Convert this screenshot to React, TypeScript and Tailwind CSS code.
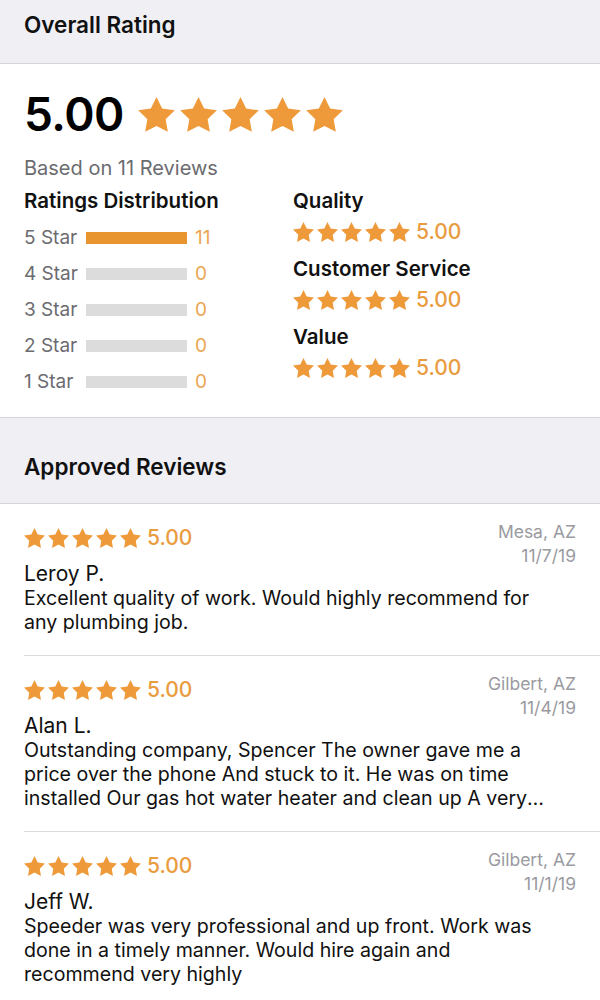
import React from "react";

const FONT = { fontFamily: "Inter, 'Noto Sans', sans-serif" };

function Star({ className }: { className: string }) {
  return (
    <svg viewBox="2 2 20 19.1" className={className} fill="currentColor">
      <path d="M12 2l3.09 6.26L22 9.27l-5 4.87 1.18 6.88L12 17.770l-6.18 3.25L7 14.14 2 9.27l6.91-1.01L12 2z" />
    </svg>
  );
}

function Stars({ size = "small" }: { size?: "small" | "big" }) {
  const big = size === "big";
  return (
    <div className={big ? "flex gap-[5px] text-[#ee9a3a]" : "flex gap-[3px] text-[#ee9a3a]"}>
      {[0, 1, 2, 3, 4].map(i => (
        <Star key={i} className={big ? "w-[37px] h-[35px]" : "w-[21px] h-[20px]"} />
      ))}
    </div>
  );
}

function StarScore() {
  return (
    <div className="flex items-center h-6 gap-[6px]">
      <Stars />
      <span className="text-[21px] font-medium text-[#e99b40] leading-6">5.00</span>
    </div>
  );
}

const DIST = [
  { label: "5 Star", count: 11 },
  { label: "4 Star", count: 0 },
  { label: "3 Star", count: 0 },
  { label: "2 Star", count: 0 },
  { label: "1 Star", count: 0 },
];

const REVIEWS = [
  {
    name: "Leroy P.",
    place: "Mesa, AZ",
    date: "11/7/19",
    text: "Excellent quality of work. Would highly recommend for any plumbing job.",
  },
  {
    name: "Alan L.",
    place: "Gilbert, AZ",
    date: "11/4/19",
    text: "Outstanding company, Spencer The owner gave me a price over the phone And stuck to it. He was on time installed Our gas hot water heater and clean up A very professional job and friendly service, will use again.",
  },
  {
    name: "Jeff W.",
    place: "Gilbert, AZ",
    date: "11/1/19",
    text: "Speeder was very professional and up front. Work was done in a timely manner. Would hire again and recommend very highly",
  },
];

function SectionHeader({ title, tall }: { title: string; tall?: boolean }) {
  return (
    <div
      className={
        tall
          ? "bg-[#efeff4] border-y border-[#d6d6da] h-[87px] pt-[34px] px-6"
          : "bg-[#efeff4] border-b border-[#d6d6da] h-[64px] pt-[10px] px-6"
      }
    >
      <h2 className="text-[22.5px] font-semibold leading-[30px] text-[#111]">{title}</h2>
    </div>
  );
}

export default function App() {
  return (
    <div className="w-[600px] h-[1000px] overflow-hidden bg-white" style={FONT}>
      <SectionHeader title="Overall Rating" />

      <div className="px-6 pt-[27px] pb-[17px]">
        <div className="flex items-center gap-[14px]">
          <span className="text-[46px] font-semibold leading-[46px] text-black tracking-[-0.5px]">5.00</span>
          <Stars size="big" />
        </div>
        <p className="mt-[19px] text-[20px] leading-6 text-[#6b6b70]">Based on 11 Reviews</p>

        <div className="mt-[9px] flex">
          <div className="w-[269px]">
            <h3 className="text-[20.5px] font-semibold leading-6 text-[#111]">Ratings Distribution</h3>
            <div className="mt-[7px]">
              {DIST.map(d => (
                <div key={d.label} className="flex items-center h-9">
                  <span className="w-[62px] text-[19px] text-[#6b6b70]">{d.label}</span>
                  <div className="w-[101px] h-3 bg-[#dcdcdc]">
                    {d.count > 0 && <div className="h-3 w-full bg-[#e8952f]" />}
                  </div>
                  <span className="ml-[8px] text-[19px] text-[#eba652]">{d.count}</span>
                </div>
              ))}
            </div>
          </div>
          <div className="flex flex-col">
            <h3 className="text-[20.5px] font-semibold leading-6 text-[#111]">Quality</h3>
            <div className="mt-[7px]"><StarScore /></div>
            <h3 className="mt-[13px] text-[20.5px] font-semibold leading-6 text-[#111]">Customer Service</h3>
            <div className="mt-[7px]"><StarScore /></div>
            <h3 className="mt-[13px] text-[20.5px] font-semibold leading-6 text-[#111]">Value</h3>
            <div className="mt-[7px]"><StarScore /></div>
          </div>
        </div>
      </div>

      <SectionHeader title="Approved Reviews" tall />

      <div>
        {REVIEWS.map((r, i) => (
          <div key={r.name} className={i > 0 ? "ml-6 border-t border-[#dcdcdc]" : "ml-6"}>
            <div className="pr-6 pt-[16px] pb-[21px]">
              <div className="flex justify-between">
                <div>
                  <div className="mt-[6px]"><StarScore /></div>
                  <div className="mt-3 text-[21px] leading-6 text-[#111]">{r.name}</div>
                </div>
                <div className="text-right text-[17.5px] leading-6 text-[#9a9a9f]">
                  <div>{r.place}</div>
                  <div>{r.date}</div>
                </div>
              </div>
              <p className="max-w-[540px] text-[19.6px] leading-6 text-[#111] line-clamp-3">{r.text}</p>
            </div>
          </div>
        ))}
      </div>
    </div>
  );
}
